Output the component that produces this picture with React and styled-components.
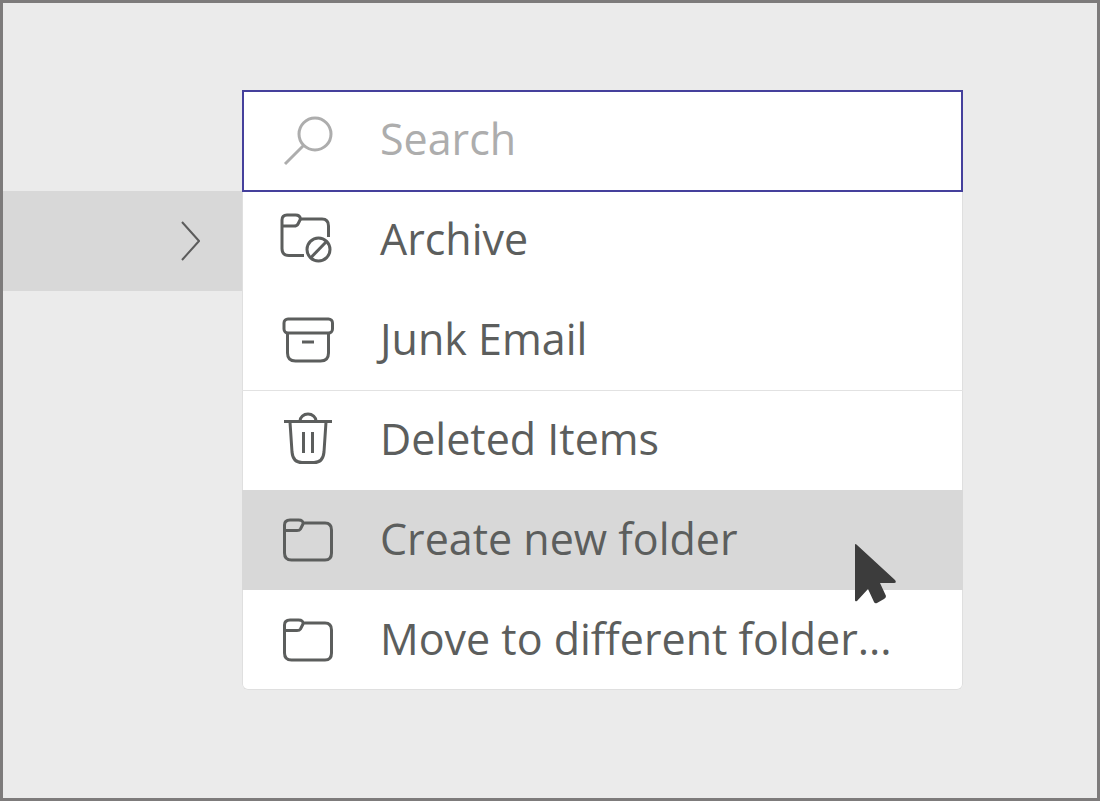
import { useState } from 'react';
import styled, { createGlobalStyle } from 'styled-components'

const folders = [
    { id: 'archive', label: 'Archive', ItemIcon: BlockedFolderIcon },
    { id: 'junk', label: 'Junk Email', ItemIcon: BoxIcon },
    { id: 'deleted', label: 'Deleted Items', ItemIcon: TrashIcon, divider: true },
    { id: 'create', label: 'Create new folder', ItemIcon: FolderIcon },
    { id: 'move', label: 'Move to different folder...', ItemIcon: FolderIcon },
]

function BlockedFolderIcon() {
    return (
        <Icon viewBox="0 0 60 60" aria-hidden="true">
            <path d="M26 46.500H11Q4 46.500 4 39.500V11Q4 6 9 6H17.500Q22 6 22.500 10H44Q50.500 10 50.500 17V28" />
            <path d="M4 17H16Q19 17 20 15L22.500 10" />
            <circle cx="40.500" cy="40.500" r="11.500" />
            <path d="M33 48.500L48.500 32.500" />
        </Icon>
    )
}

function BoxIcon() {
    return (
        <Icon viewBox="0 0 60 60" aria-hidden="true">
            <rect x="6" y="10" width="48.500" height="14" rx="4" />
            <path d="M9.500 24v20q0 8 8 8h25q8 0 8-8V24" />
            <path d="M24 33h12" />
        </Icon>
    )
}

function TrashIcon() {
    return (
        <Icon viewBox="0 0 60 60" aria-hidden="true">
            <path d="M6 12.500h48" />
            <path d="M22 12a8 7 0 0 1 16 0" />
            <path d="M12 13l2 30q1 10.500 10 10.500h12q9 0 10-10.500l2-30" />
            <path d="M25.500 23v21M34.500 23v21" />
        </Icon>
    )
}

function FolderIcon() {
    return (
        <Icon viewBox="0 0 60 60" aria-hidden="true">
            <path d="M25 14H47Q53.500 14 53.500 21V44Q53.500 51 47 51H13.500Q6.500 51 6.500 44V16Q6.500 11 12 11H20.500Q25.500 11 25 15L22.500 20Q21.500 21.500 19 21.500H7" />
        </Icon>
    )
}

function MoveMenu() {
    const [query, setQuery] = useState('')
    const [active, setActive] = useState('create')

    return (
        <div>
            <SearchBox>
                <SearchIcon viewBox="0 0 60 60" aria-hidden="true">
                    <circle cx="37" cy="24" r="16" />
                    <path d="M26 35L7 54" />
                </SearchIcon>
                <SearchInput
                    type="text"
                    placeholder="Search"
                    aria-label="Search"
                    value={query}
                    onChange={(e) => setQuery(e.target.value)}
                />
            </SearchBox>
            <Folders>
                {folders.map(({ id, label, ItemIcon, divider }) => (
                    <MenuItem
                        key={id}
                        type="button"
                        $active={id === active}
                        $divider={divider}
                        onMouseEnter={() => setActive(id)}
                    >
                        <ItemIcon />
                        <Label>{label}</Label>
                        {id === active && <Cursor viewBox="0 0 42 60" aria-hidden="true">
                            <path d="M0 1Q0-1 2 1L40 36Q42 39 39 39H25L31 52Q31 54 29 55L22 59Q20 60 19 58L13 45L2 57Q0 58 0 56Z" />
                        </Cursor>}
                    </MenuItem>
                ))}
            </Folders>
        </div>
    )
}

function App() {
    return (
        <>
            <GlobalStyle />
            <Screen>
                <Trigger type="button" aria-label="Move to">
                    <Chevron viewBox="0 0 20 40" aria-hidden="true">
                        <path d="M2 1L19 20L2 39" />
                    </Chevron>
                </Trigger>
                <MoveMenu />
            </Screen>
        </>
    )
}

export default App

const GlobalStyle = createGlobalStyle`
    * {
        box-sizing: border-box;
    }
    body {
        margin: 0;
        font-family: 'Open Sans', 'Noto Sans', sans-serif;
    }
`

const Screen = styled.main`
    display: grid;
    grid-template-columns: minmax(0, 239fr) minmax(0, 721fr) minmax(0, 134fr);
    align-items: start;
    min-height: 100vh;
    padding: 87px 0;
    border: 3px solid #7d7b7b;
    background: #ebebeb;
`

const Trigger = styled.button`
    display: flex;
    align-items: center;
    justify-content: flex-end;
    height: 100px;
    margin-top: 101px;
    padding: 0 42px;
    border: 0;
    background: #d8d8d8;
`

const Chevron = styled.svg`
    flex: none;
    width: 20px;
    height: 40px;
    fill: none;
    stroke: #5c5c5c;
    stroke-width: 2;
`

const SearchBox = styled.div`
    position: relative;
    z-index: 1;
    display: flex;
    align-items: center;
    gap: 42px;
    height: 102px;
    padding: 0 34px 2px;
    border: 2px solid #45409c;
    background: #fff;
`

const Folders = styled.div`
    display: flex;
    flex-direction: column;
    margin-top: -2px;
    border-radius: 0 0 6px 6px;
    background: #fff;
    box-shadow: inset 0 0 0 1px #dfdfdf;
`

const Icon = styled.svg`
    flex: none;
    width: 60px;
    height: 60px;
    fill: none;
    stroke: #5c5e5d;
    stroke-width: 3;
`

const SearchIcon = styled(Icon)`
    stroke: #adadad;
`

const SearchInput = styled.input`
    flex: 1;
    min-width: 0;
    padding: 0 0 2px;
    border: 0;
    outline: 0;
    background: transparent;
    color: #5c5e5d;
    font: inherit;
    font-size: 43px;
    line-height: 60px;

    &::placeholder {
        color: #adadad;
        opacity: 1;
    }
`

const MenuItem = styled.button`
    position: relative;
    display: flex;
    align-items: center;
    gap: 42px;
    height: 100px;
    padding: 0 36px 2px;
    border: 0;
    background: ${({ $active }) => $active ? '#d8d8d8' : 'transparent'};
    box-shadow: ${({ $divider }) => $divider ? 'inset 0 1px #e2e2e2' : 'none'};
    color: #5c5e5d;
    font: inherit;
    font-size: 43px;
    line-height: 60px;
    text-align: left;

    &:last-child {
        border-radius: 0 0 6px 6px;
    }
`

const Label = styled.span`
    white-space: nowrap;
`

const Cursor = styled.svg`
    position: absolute;
    top: 54px;
    right: 66px;
    z-index: 1;
    width: 42px;
    height: 60px;
    fill: #3c3c3c;
    pointer-events: none;
`
